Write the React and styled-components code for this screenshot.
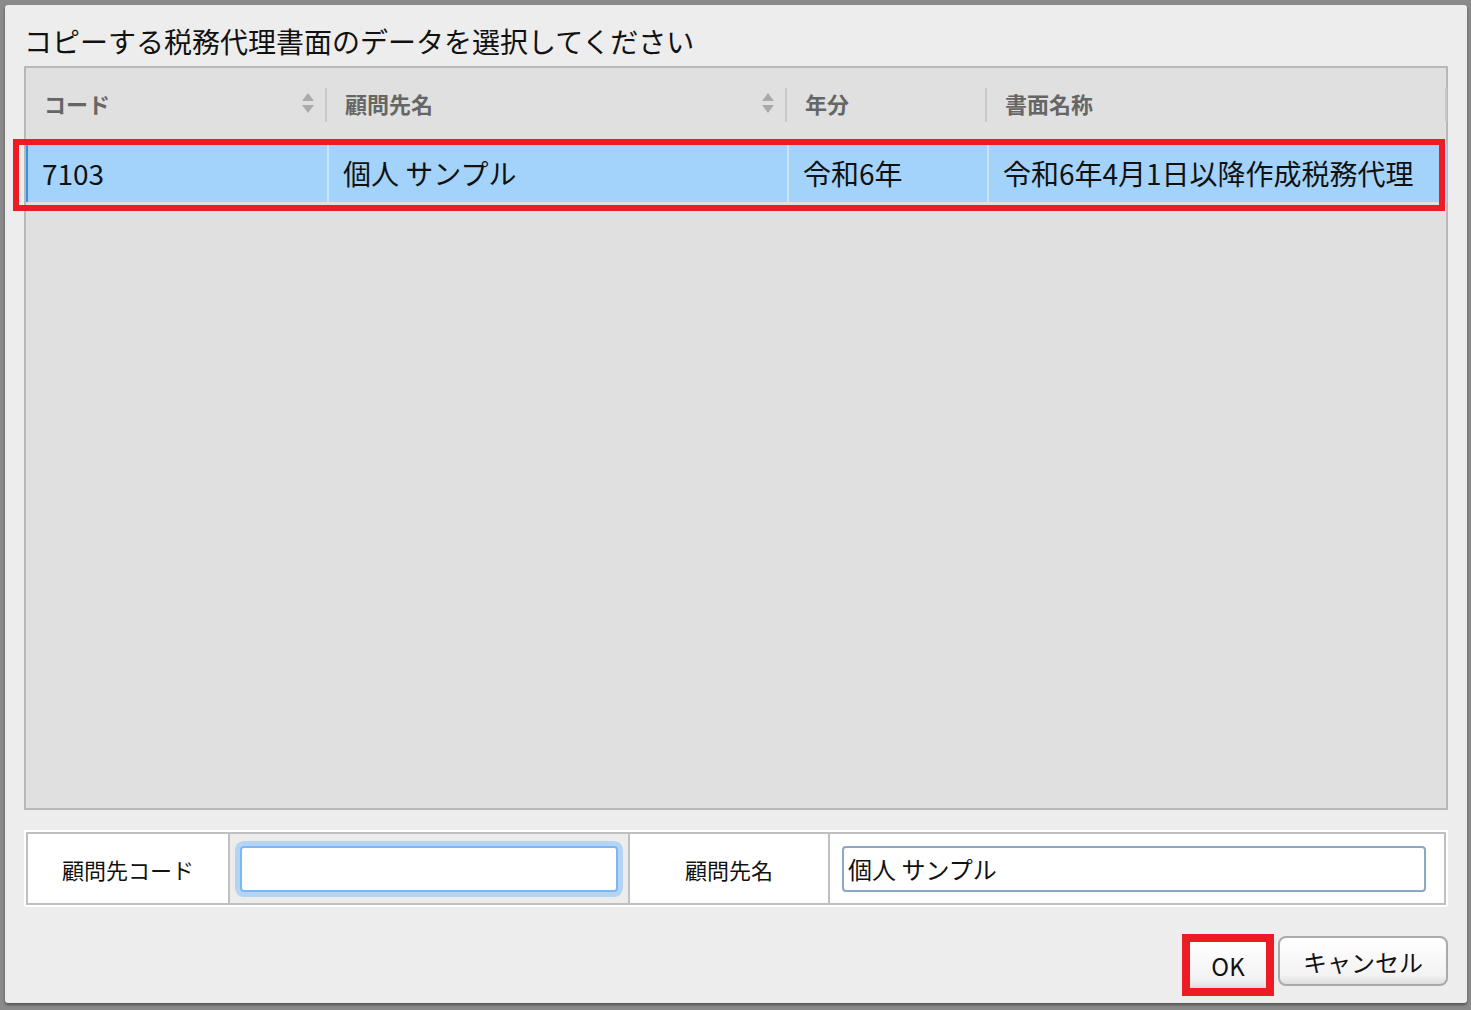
import React from "react";
import styled, { createGlobalStyle } from "styled-components";

const Global = createGlobalStyle`
  html, body { margin: 0; padding: 0; background: #8a8a8a; width: 1471px; height: 1010px; overflow: hidden; }
  * { box-sizing: border-box; }
  body { font-family: "Noto Sans CJK JP", "Noto Sans", sans-serif; }
`;

const Dialog = styled.div`
  margin: 5px 4px 0 5px;
  height: 998px;
  background: #ededed;
  border-radius: 3px;
  box-shadow: 0 2px 3px rgba(0,0,0,0.4);
  padding: 14px 19px 0 19px;
  display: flex;
  flex-direction: column;
`;

const Title = styled.div`
  font-size: 28px;
  line-height: 44px;
  color: #111;
  height: 47px;
  padding-left: 0;
`;

const Grid = styled.div`
  height: 744px;
  border: 2px solid #b8b8b8;
  background: #e0e0e0;
  position: relative;
`;

const Row = styled.div`
  display: grid;
  grid-template-columns: 301px 460px 200px 460px;
  height: ${p => p.$h}px;
  align-items: stretch;
`;

const HeadCell = styled.div`
  display: flex;
  align-items: center;
  justify-content: space-between;
  padding: 0 12px 0 18px;
  font-size: 22px;
  font-weight: 700;
  color: #666;
  position: relative;
  &::after {
    content: "";
    position: absolute;
    right: 0;
    top: 20px;
    bottom: 16px;
    width: 2px;
    background: #c8c8c8;
  }
`;

const Cell = styled.div`
  background: #a3d3fb;
  border-left: 2px solid ${p => (p.$first ? "#3c8fe0" : "#c9e3f8")};
  display: flex;
  align-items: center;
  padding-left: 14px;
  font-size: 28px;
  color: #111;
  white-space: nowrap;
  overflow: hidden;
`;

const Selected = styled.div`
  position: absolute;
  left: -13px;
  right: 1px;
  top: 71px;
  height: 72px;
  border: 6px solid #ed1c24;
  pointer-events: none;
`;

const DataRow = styled(Row)`
  margin-top: 6px;
`;

const Sort = () => (
  <svg width="14" height="22" viewBox="0 0 14 22">
    <path d="M7 1 L13 9 H1 Z" fill="#aaa" />
    <path d="M7 21 L13 13 H1 Z" fill="#aaa" />
  </svg>
);

const Form = styled.div`
  margin-top: 20px;
  height: 77px;
  border: 2px solid #fff;
  outline: 2px solid #c0c0c0;
  outline-offset: -4px;
  display: grid;
  grid-template-columns: 202px 400px 200px 1fr;
  background: #fff;
  padding: 2px;
`;

const Label = styled.div`
  display: flex;
  align-items: center;
  justify-content: center;
  font-size: 22px;
  color: #111;
  background: #fff;
  border-right: 2px solid #c0c0c0;
`;

const InputCell = styled.div`
  background: ${p => (p.$gray ? "#ececec" : "#fff")};
  border-right: ${p => (p.$last ? "none" : "2px solid #c0c0c0")};
  display: flex;
  align-items: center;
  padding: 0 ${p => (p.$last ? "18px" : "6px")} 0 ${p => (p.$last ? "12px" : "6px")};
`;

const Input = styled.div`
  width: 100%;
  height: ${p => (p.$focus ? "56px" : "46px")};
  background: #fff;
  border: ${p => (p.$focus ? "2px solid #7ab8f5" : "2px solid #8aa8c6")};
  box-shadow: ${p => (p.$focus ? "0 0 0 5px #b5d4f4" : "none")};
  border-radius: 4px;
  font-size: 24px;
  color: #111;
  padding: 2px 4px;
  display: flex;
  align-items: center;
  ${p => p.$focus && "margin: 0 4px; width: calc(100% - 8px); height: 46px;"}
`;

const Buttons = styled.div`
  display: flex;
  justify-content: flex-end;
  gap: 10px;
  margin-top: 26px;
`;

const Btn = styled.button`
  width: ${p => p.$w}px;
  height: 50px;
  background: linear-gradient(#fff, #f3f3f3 80%, #ddd);
  border: 2px solid ${p => (p.$hl ? "#ed1c24" : "#aaa")};
  outline: ${p => (p.$hl ? "6px solid #ed1c24" : "none")};
  outline-offset: 0;
  border-radius: ${p => (p.$hl ? "0" : "8px")};
  font-family: "Noto Sans CJK JP", sans-serif;
  font-size: 24px;
  color: #111;
  margin-top: ${p => (p.$hl ? "7px" : "3px")};
`;

export default function App() {
  return (
    <>
      <Global />
      <Dialog>
        <Title>コピーする税務代理書面のデータを選択してください</Title>
        <Grid>
          <Row $h={70}>
            <HeadCell>コード<Sort /></HeadCell>
            <HeadCell>顧問先名<Sort /></HeadCell>
            <HeadCell>年分</HeadCell>
            <HeadCell>書面名称</HeadCell>
          </Row>
          <DataRow $h={58}>
            <Cell $first>7103</Cell>
            <Cell>個人 サンプル</Cell>
            <Cell>令和6年</Cell>
            <Cell>令和6年4月1日以降作成税務代理</Cell>
          </DataRow>
          <Selected />
        </Grid>
        <Form>
          <Label>顧問先コード</Label>
          <InputCell $gray><Input $focus /></InputCell>
          <Label>顧問先名</Label>
          <InputCell $last><Input>個人 サンプル</Input></InputCell>
        </Form>
        <Buttons>
          <Btn $w={80} $hl>OK</Btn>
          <Btn $w={170}>キャンセル</Btn>
        </Buttons>
      </Dialog>
    </>
  );
}
